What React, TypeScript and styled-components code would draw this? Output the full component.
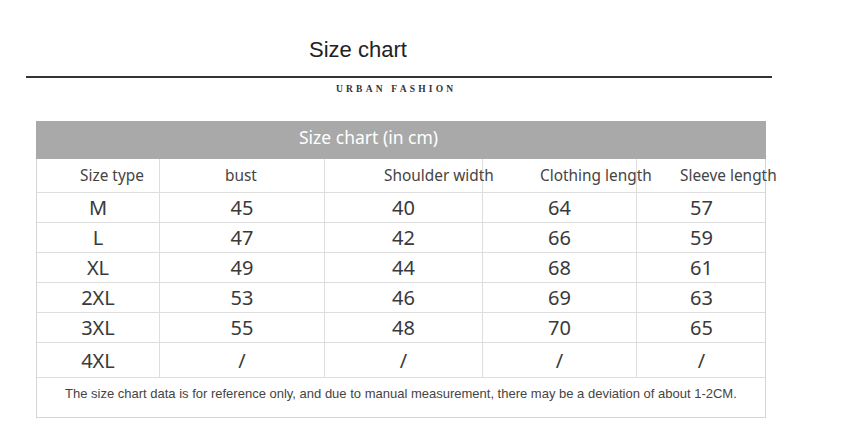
import React from "react";
import styled, { createGlobalStyle } from "styled-components";

const Global = createGlobalStyle`
  html, body { margin: 0; padding: 0; background: #fff; }
  body { font-family: "Noto Sans", "Liberation Sans", sans-serif; }
`;

const Page = styled.div`
  width: 842px;
  height: 441px;
  overflow: hidden;
  background: #fff;
  padding-top: 37px;
  box-sizing: border-box;
`;

const Heading = styled.header`
  margin-left: 26px;
  width: 746px;
  display: flex;
  flex-direction: column;
`;

const Title = styled.h1`
  margin: 0 0 0 283px;
  font-family: "Liberation Sans", Arial, sans-serif;
  font-weight: 400;
  font-size: 22px;
  line-height: 26px;
  color: #222;
  height: 39px;
`;

const Rule = styled.div`
  height: 2px;
  background: #333;
`;

const Brand = styled.div`
  margin: 5px 0 0 310px;
  font-family: "Liberation Serif", "Times New Roman", serif;
  font-weight: 700;
  font-size: 9.5px;
  letter-spacing: 3.2px;
  color: #333;
  line-height: 12px;
`;

const Table = styled.div`
  margin: 26px 0 0 36px;
  width: 730px;
  box-sizing: border-box;
  border: 1px solid #d6d6d6;
  border-top: none;
  display: flex;
  flex-direction: column;
`;

const Band = styled.div`
  height: 38px;
  background: #a9a9a9;
  color: #fff;
  font-size: 17.5px;
  display: flex;
  align-items: center;
  padding-left: 263px;
  padding-bottom: 6px;
  box-sizing: border-box;
  margin: 0 -1px;
`;

const Row = styled.div<{ $h: number }>`
  display: grid;
  grid-template-columns: 123px 165px 158px 154px 129px;
  height: ${(p) => p.$h}px;
  border-bottom: 1px solid #dedede;
  box-sizing: border-box;
`;

const Cell = styled.div<{ $last?: boolean }>`
  display: flex;
  align-items: center;
  justify-content: center;
  border-right: ${(p) => (p.$last ? "none" : "1px solid #dedede")};
  font-size: 20px;
  color: #3a3a3a;
  white-space: nowrap;
`;

const HeadCell = styled(Cell)<{ $indent: number }>`
  justify-content: flex-start;
  padding-left: ${(p) => p.$indent}px;
  font-size: 15.4px;
  color: #444;
  overflow: visible;
`;

const Note = styled.div`
  height: 39px;
  padding: 8px 0 0 28px;
  box-sizing: border-box;
  font-family: "Liberation Sans", Arial, sans-serif;
  font-size: 13px;
  color: #444;
  white-space: nowrap;
`;

const heads: [string, number][] = [
  ["Size type", 43],
  ["bust", 65],
  ["Shoulder width", 59],
  ["Clothing length", 57],
  ["Sleeve length", 43],
];

const rows: string[][] = [
  ["M", "45", "40", "64", "57"],
  ["L", "47", "42", "66", "59"],
  ["XL", "49", "44", "68", "61"],
  ["2XL", "53", "46", "69", "63"],
  ["3XL", "55", "48", "70", "65"],
  ["4XL", "/", "/", "/", "/"],
];

export default function App() {
  return (
    <Page>
      <Global />
      <Heading>
        <Title>Size chart</Title>
        <Rule />
        <Brand>URBAN FASHION</Brand>
      </Heading>
      <Table>
        <Band>Size chart (in cm)</Band>
        <Row $h={34}>
          {heads.map(([t, i], k) => (
            <HeadCell key={t} $indent={i} $last={k === 4}>
              {t}
            </HeadCell>
          ))}
        </Row>
        {rows.map((r, ri) => (
          <Row key={r[0]} $h={ri === 5 ? 35 : 30}>
            {r.map((v, k) => (
              <Cell key={k} $last={k === 4}>
                {v}
              </Cell>
            ))}
          </Row>
        ))}
        <Note>
          The size chart data is for reference only, and due to manual measurement, there may be a deviation of about 1-2CM.
        </Note>
      </Table>
    </Page>
  );
}
